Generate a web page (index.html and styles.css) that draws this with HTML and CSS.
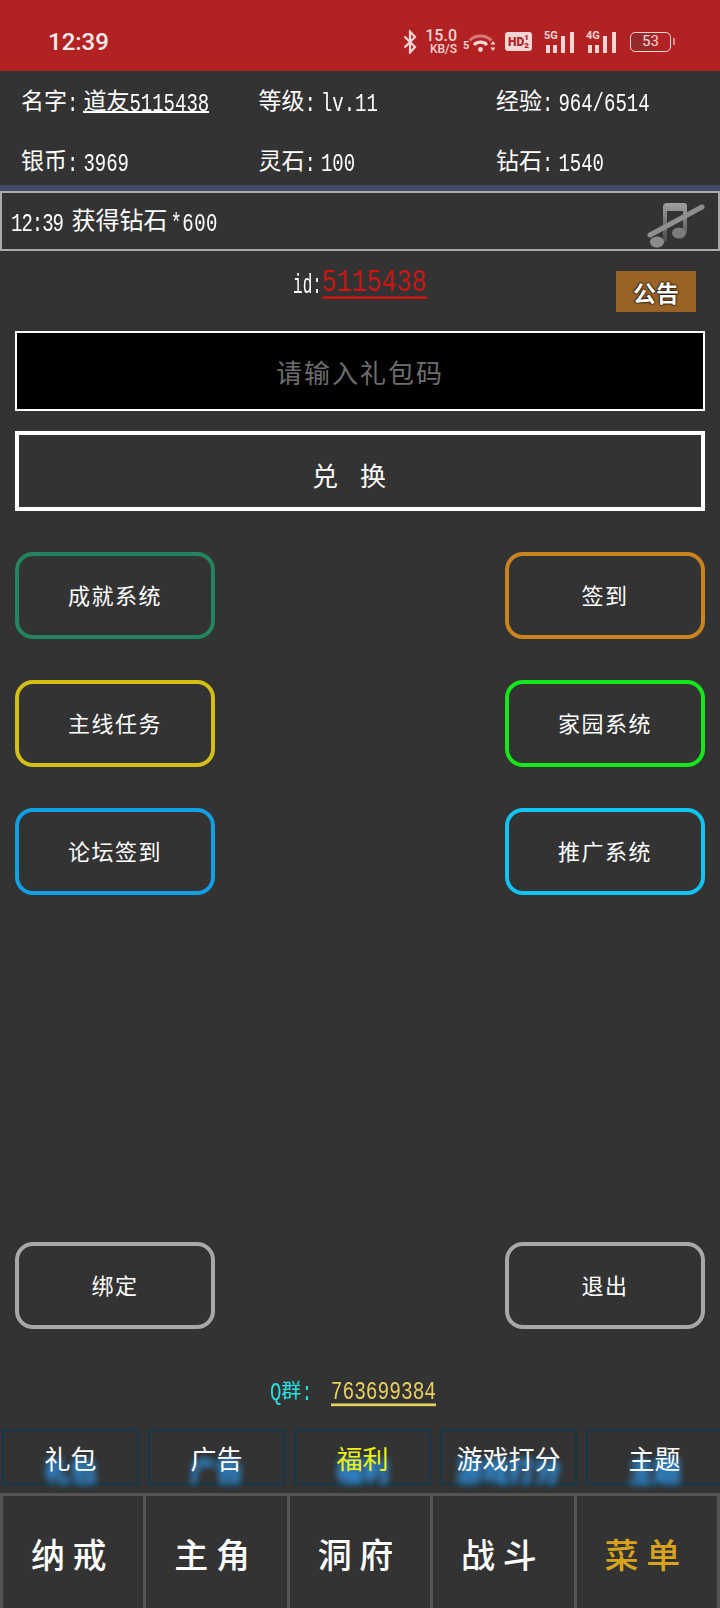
FILE: index.html
```html
<!DOCTYPE html>
<html lang="zh-CN">

<head>
    <meta charset="UTF-8">
    <meta name="viewport" content="width=device-width, initial-scale=1.0">
    <title>礼包码</title>
    <link rel="stylesheet" href="styles.css">
</head>

<body>
    <header class="status-bar">
        <span class="clock">12:39</span>
        <div class="status-icons">
            <svg class="ic-bt" viewBox="0 0 14 24" width="14" height="24">
                <path d="M1.500 6.500l10.500 10.500-5 5.500V1.500l5 5.500L1.500 17.500" fill="none" stroke="#f6d5d5" stroke-width="2.200" />
            </svg>
            <div class="speed"><b>15.0</b><small>KB/S</small></div>
            <div class="wifi">
                <span>5</span>
                <svg viewBox="0 0 26 21" width="26" height="21">
                    <path d="M0.500 9.500a15.500 15.500 0 0 1 22 0" fill="none" stroke="#d87878" stroke-width="3" />
                    <path d="M5 14a9 9 0 0 1 13 0" fill="none" stroke="#f6d5d5" stroke-width="3.200" />
                    <circle cx="11.500" cy="18.500" r="2.400" fill="#f6d5d5" />
                    <path d="M24 10l2.500 3.500h-5zM24 20l2.500-3.500h-5z" fill="#f6d5d5" />
                </svg>
            </div>
            <div class="hd">HD<span>1<br>2</span></div>
            <div class="signal"><i class="net">5G</i><svg viewBox="0 0 31 21" width="31" height="21">
                    <path d="M2 13h4v8H2zM9 13h4v8H9zM17 4h4v17h-4zM26 0h4v21h-4z" fill="#f6d5d5" />
                </svg></div>
            <div class="signal"><i class="net">4G</i><svg viewBox="0 0 31 21" width="31" height="21">
                    <path d="M2 13h4v8H2zM9 13h4v8H9zM17 4h4v17h-4zM26 0h4v21h-4z" fill="#f6d5d5" />
                </svg></div>
            <div class="battery"><span class="level"></span><span class="pct">53</span></div>
        </div>
    </header>

    <section class="info">
        <div>名字<span class="num colon">:</span><a class="name-link">道友<span class="num">5115438</span></a></div>
        <div>等级<span class="num colon">:</span><span class="num">lv.11</span></div>
        <div>经验<span class="num colon">:</span><span class="num">964/6514</span></div>
        <div>银币<span class="num colon">:</span><span class="num">3969</span></div>
        <div>灵石<span class="num colon">:</span><span class="num">100</span></div>
        <div>钻石<span class="num colon">:</span><span class="num">1540</span></div>
    </section>

    <section class="log">
        <span class="log-text"><span class="num time">12:39</span> 获得钻石<span class="num star">*600</span></span>
        <svg viewBox="0 0 60 54" width="60" height="54">
            <defs>
                <linearGradient id="note" x1="0" y1="0" x2="0" y2="1">
                    <stop offset="0" stop-color="#a0a0a0" />
                    <stop offset="1" stop-color="#4a4a4a" />
                </linearGradient>
            </defs>
            <path d="M17 13q0-4 4-4h17q3 0 3 3v27h-4V17H21v31h-4z" fill="url(#note)" />
            <ellipse cx="11" cy="48" rx="7" ry="5.500" fill="#8c8c8c" />
            <ellipse cx="33" cy="39" rx="7" ry="5.500" fill="#7c7c7c" />
            <path d="M4 41L56 13" stroke="#8f8f8f" stroke-width="5" stroke-linecap="round" />
        </svg>
    </section>

    <main class="content">
        <div class="id-row">
            <div class="id-text"><span class="num id-label">id:</span><a class="num id-link">5115438</a></div>
            <button class="notice">公告</button>
        </div>

        <input class="code-input" type="text" placeholder="请输入礼包码">
        <button class="redeem">兑 换</button>

        <div class="menu-grid">
            <button class="menu-btn green">成就系统</button>
            <button class="menu-btn orange">签到</button>
            <button class="menu-btn yellow">主线任务</button>
            <button class="menu-btn lime">家园系统</button>
            <button class="menu-btn blue">论坛签到</button>
            <button class="menu-btn sky">推广系统</button>
        </div>

        <div class="menu-grid bottom">
            <button class="menu-btn gray">绑定</button>
            <button class="menu-btn gray">退出</button>
        </div>

        <div class="qq"><span class="qq-label"><span class="num">Q</span>群<span class="num">:</span></span><a class="num qq-num">763699384</a></div>
    </main>

    <nav class="tabs">
        <a class="tab">礼包</a>
        <a class="tab">广告</a>
        <a class="tab active">福利</a>
        <a class="tab">游戏打分</a>
        <a class="tab">主题</a>
    </nav>

    <nav class="bottom-nav">
        <a>纳 戒</a>
        <a>主 角</a>
        <a>洞 府</a>
        <a>战 斗</a>
        <a class="current">菜 单</a>
    </nav>
</body>

</html>
```

FILE: styles.css
```css
* {
    box-sizing: border-box;
    padding: 0;
    margin: 0;
}

body {
    display: flex;
    flex-direction: column;
    width: 720px;
    height: 1608px;
    overflow: hidden;
    background-color: #333;
    color: white;
    font-family: "Noto Sans CJK SC", sans-serif;
}

button,
input {
    font-family: inherit;
    color: white;
    background: none;
    border: none;
}

/* the game's digits are tall and narrow */
.num {
    display: inline-block;
    font-family: "Liberation Mono", monospace;
    font-size: 19px;
    line-height: 1;
    white-space: pre;
    transform: scaleY(1.35);
}

.colon {
    margin-right: 5px;
}

.time {
    letter-spacing: -1px;
    margin-right: 3px;
}

.star {
    margin-left: 3px;
    letter-spacing: 0.500px;
}

/* status bar */
.status-bar {
    display: flex;
    justify-content: space-between;
    align-items: center;
    height: 71px;
    padding: 12px 46px 0 48px;
    background-color: #b22222;
}

.clock {
    font-family: Roboto, sans-serif;
    font-size: 24px;
    font-weight: 500;
    color: #fbeaea;
}

.status-icons {
    display: flex;
    align-items: center;
    color: #f6d5d5;
    font-family: Roboto, sans-serif;
}

.speed {
    display: flex;
    flex-direction: column;
    align-items: flex-end;
    width: 30px;
    margin-left: 10px;
}

.speed b {
    font-size: 16px;
    font-weight: 500;
    line-height: 14px;
}

.speed small {
    font-size: 12px;
    font-weight: 500;
    line-height: 12px;
}

.wifi {
    display: flex;
    align-items: flex-end;
    width: 32px;
    margin-left: 6px;
    font-size: 11px;
    font-weight: 700;
    line-height: 13px;
}

.wifi span {
    width: 6px;
}

.hd {
    display: flex;
    align-items: center;
    justify-content: center;
    width: 27px;
    height: 19px;
    margin-left: 10px;
    border-radius: 3px;
    background-color: #f6d5d5;
    color: #b22222;
    font-size: 12px;
    font-weight: 900;
}

.hd span {
    font-size: 8px;
    line-height: 8px;
}

.signal {
    position: relative;
    width: 31px;
    height: 22px;
    margin-left: 11px;
}

.hd + .signal {
    margin-left: 12px;
}

.signal svg {
    display: block;
    position: absolute;
    left: 0;
    bottom: 0;
}

.net {
    position: absolute;
    left: 0;
    top: -1px;
    font-size: 11px;
    font-style: normal;
    font-weight: 700;
    line-height: 12px;
}

.battery {
    position: relative;
    width: 41px;
    height: 20px;
    margin: 0 3px 0 13px;
    border: 1.500px solid #f6d5d5;
    border-radius: 5px;
}

.battery::after {
    content: "";
    position: absolute;
    top: 5px;
    right: -5px;
    width: 2px;
    height: 7px;
    background-color: #d98a8a;
}

.level {
    position: absolute;
    inset: 1px auto 1px 1px;
    width: 54%;
    border-radius: 3px;
    background-color: #962a2a;
}

.pct {
    position: relative;
    display: block;
    text-align: center;
    font-size: 15px;
    line-height: 17px;
}

/* player info */
.info {
    display: grid;
    grid-template-columns: 237.500px 237.500px 1fr;
    grid-auto-rows: 40px;
    row-gap: 20px;
    padding: 8px 0 6px 21px;
    font-size: 23px;
    line-height: 40px;
}

.info > div {
    white-space: nowrap;
}

.name-link {
    display: inline-block;
    height: 29px;
    line-height: 30px;
    border-bottom: 2px solid white;
    color: white;
}

/* message log */
.log {
    display: flex;
    justify-content: space-between;
    align-items: center;
    height: 66px;
    padding: 0 14px 0 11px;
    border-top: 6px solid #44496a;
    font-size: 24px;
    line-height: 40px;
    background-color: #333;
    box-shadow: inset 0 0 0 2px #aaa;
}

.log-text {
    margin-bottom: 4px;
}

.log svg {
    filter: blur(0.600px);
}

/* main block */
.content {
    display: flex;
    flex: 1;
    flex-direction: column;
    padding: 0 15px;
}

.id-row {
    display: grid;
    grid-template-columns: 1fr auto 1fr;
    height: 80px;
    padding-top: 20px;
}

.id-text {
    grid-column: 2;
    height: 29px;
    white-space: nowrap;
}

.id-label {
    font-size: 16px;
    transform: scaleY(1.7);
}

.id-link {
    border-bottom: 2.500px solid #d01515;
    color: #d01515;
    font-size: 25px;
    line-height: 21px;
    transform: scaleY(1.25);
}

.notice {
    grid-column: 3;
    justify-self: end;
    width: 80px;
    height: 41px;
    margin-right: 9px;
    background-color: #9a6326;
    font-size: 23px;
    font-weight: 700;
    text-shadow: 0 0 2px black, 0 0 2px black, 0 0 1px black;
}

.code-input {
    width: 100%;
    height: 80px;
    border: 2px solid white;
    background-color: black;
    text-align: center;
    font-size: 26px;
    letter-spacing: 2px;
}

.code-input::placeholder {
    color: #6e6e6e;
}

.redeem {
    width: 100%;
    height: 80px;
    margin-top: 20px;
    padding: 7px 14px 0 0;
    border: 4px solid white;
    font-size: 26px;
    letter-spacing: 8px;
}

.menu-grid {
    display: grid;
    grid-template-columns: 200px 200px;
    justify-content: space-between;
    row-gap: 41px;
    margin-top: 41px;
}

.menu-grid.bottom {
    margin-top: auto;
}

.menu-btn {
    height: 87px;
    padding-bottom: 3px;
    border: 4px solid #aaa;
    border-radius: 18px;
    font-size: 22px;
    letter-spacing: 1.500px;
}

.green { border-color: #22855f; }
.orange { border-color: #c9831f; }
.yellow { border-color: #d4bf14; }
.lime { border-color: #14e81c; }
.blue { border-color: #12a0e4; }
.sky { border-color: #10c4f4; }
.gray { border-color: #a8a8a8; }

.qq {
    height: 36px;
    margin: 43px 14px 21px 0;
    line-height: 36px;
    text-align: center;
    font-size: 20px;
}

.qq-label {
    color: #2adfe0;
}

.qq-num {
    margin-left: 18px;
    border-bottom: 2px solid #e8d060;
    color: #e8d060;
    font-size: 19.500px;
    line-height: 16px;
}

/* tabs */
.tabs {
    display: flex;
    gap: 9px;
    margin: 0 -20px 8px 2px;
    font-size: 26px;
}

.tab {
    flex: 0 0 137px;
    height: 56px;
    border: 2px solid #12394a;
    text-align: center;
    line-height: 54px;
    white-space: nowrap;
    text-shadow: 0 10px 6px #2f86cc, 0 12px 7px #2f86cc, 0 13px 7px #2f86cc;
}

.tab.active {
    color: #f2f20a;
}

/* bottom nav */
.bottom-nav {
    display: flex;
    height: 115px;
    border-top: 3px solid #555;
    font-size: 34px;
    font-weight: 500;
}

.bottom-nav a {
    flex: 1;
    padding: 28px 9px 0 0;
    border-left: 3px solid #555;
    text-align: center;
    line-height: 60px;
}

.bottom-nav a:last-child {
    border-right: 3px solid #555;
}

.current {
    color: #d9a41c;
}
```
